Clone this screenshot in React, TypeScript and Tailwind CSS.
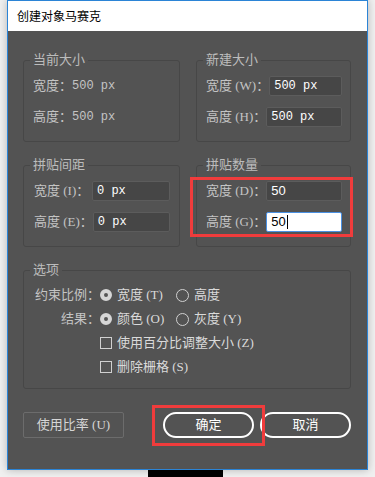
import React from "react";

const serif = "font-['Liberation_Serif','Noto_Sans_CJK_SC',serif]";
const mono = "font-['Liberation_Mono',monospace]";

const Group: React.FC<{ title: string; className?: string; children: React.ReactNode }> = ({
  title,
  className = "",
  children,
}) => (
  <div className={`relative border border-[#474747] rounded-[3px] ${className}`}>
    <span className="absolute left-[6px] top-[-9px] px-[3px] bg-[#535353] text-[13px] leading-[16px] text-[#bcbcbc]">
      {title}
    </span>
    {children}
  </div>
);

const Field: React.FC<{ label: string; value: string; sans?: boolean }> = ({ label, value, sans }) => (
  <div className="flex h-[20px] items-center justify-between">
    <span className="text-[13px] text-[#c4c4c4] whitespace-nowrap">{label}</span>
    <div className="flex h-[20px] w-[78px] items-center rounded-[2px] border border-[#5c5c5c] bg-[#464646] pl-[4px]">
      <span
        className={
          sans
            ? "font-['Liberation_Sans',sans-serif] text-[13px] text-white"
            : `${mono} text-[12px] text-white whitespace-pre`
        }
      >
        {value}
      </span>
    </div>
  </div>
);

const Radio: React.FC<{ checked?: boolean; label: string }> = ({ checked, label }) => (
  <div className="flex w-[76px] items-center gap-[5px]">
    {checked ? (
      <span className="h-[12px] w-[12px] rounded-full border-[4px] border-[#d6d6d6] bg-[#555]" />
    ) : (
      <span className="h-[13px] w-[13px] rounded-full border border-[#d0d0d0]" />
    )}
    <span className="text-[13px] text-[#dadada] whitespace-nowrap">{label}</span>
  </div>
);

const Check: React.FC<{ label: string }> = ({ label }) => (
  <div className="flex items-center gap-[5px]">
    <span className="h-[12px] w-[12px] border border-[#d0d0d0]" />
    <span className="text-[13px] text-[#dadada] whitespace-nowrap">{label}</span>
  </div>
);

export default function App() {
  return (
    <div className={`relative h-[477px] w-[375px] overflow-hidden bg-[#f0f0f0] ${serif}`}>
      <div className="ml-[7px] flex h-[470px] w-[361px] flex-col border border-[#2b84d6] shadow-[0_0_8px_rgba(0,0,0,0.25)]">
        <div className="flex h-[30px] items-center bg-white pl-[9px] font-['Noto_Sans_CJK_SC',sans-serif] text-[12px] text-black">
          创建对象马赛克
        </div>
        <div className="flex flex-1 flex-col bg-[#535353] pl-[15px] pr-[16px] pt-[29px]">
          <div className="flex gap-[16px]">
            <Group title="当前大小" className="w-[157px]">
              <div className="flex flex-col gap-[11px] pb-[14px] pl-[9px] pt-[15px]">
                <div className="flex h-[20px] items-center text-[13px] text-[#c4c4c4] whitespace-pre">
                  宽度：<span className={`${mono} text-[12px]`}>500 px</span>
                </div>
                <div className="flex h-[20px] items-center text-[13px] text-[#c4c4c4] whitespace-pre">
                  高度：<span className={`${mono} text-[12px]`}>500 px</span>
                </div>
              </div>
            </Group>
            <Group title="新建大小" className="w-[155px]">
              <div className="flex flex-col gap-[11px] pb-[14px] pl-[9px] pr-[8px] pt-[15px]">
                <Field label="宽度 (W)：" value="500 px" />
                <Field label="高度 (H)：" value="500 px" />
              </div>
            </Group>
          </div>

          <div className="mt-[23px] flex gap-[16px]">
            <Group title="拼贴间距" className="w-[157px]">
              <div className="flex flex-col gap-[11px] pb-[14px] pl-[10px] pr-[9px] pt-[15px]">
                <Field label="宽度 (I)：" value="0 px" />
                <Field label="高度 (E)：" value="0 px" />
              </div>
            </Group>
            <Group title="拼贴数量" className="w-[155px]">
              <div className="flex flex-col gap-[11px] pb-[14px] pl-[9px] pr-[8px] pt-[15px]">
                <Field label="宽度 (D)：" value="50" sans />
                <div className="flex h-[20px] items-center justify-between">
                  <span className="text-[13px] text-[#c4c4c4] whitespace-nowrap">高度 (G)：</span>
                  <div className="flex h-[20px] w-[78px] items-center rounded-[2px] border border-[#4a90e2] bg-white pl-[4px]">
                    <span className="border-r border-black pr-[1px] font-['Liberation_Sans',sans-serif] text-[13px] leading-[14px] text-black">
                      50
                    </span>
                  </div>
                </div>
              </div>
            </Group>
          </div>

          <Group title="选项" className="mt-[23px] w-full">
            <div className="flex flex-col gap-[4px] pb-[11px] pl-[10px] pt-[14px]">
              <div className="flex h-[20px] items-center">
                <span className="w-[66px] text-right text-[13px] text-[#c4c4c4] whitespace-nowrap">约束比例：</span>
                <Radio checked label="宽度 (T)" />
                <Radio label="高度" />
              </div>
              <div className="flex h-[20px] items-center">
                <span className="w-[66px] text-right text-[13px] text-[#c4c4c4] whitespace-nowrap">结果：</span>
                <Radio checked label="颜色 (O)" />
                <Radio label="灰度 (Y)" />
              </div>
              <div className="flex h-[20px] items-center pl-[66px]">
                <Check label="使用百分比调整大小 (Z)" />
              </div>
              <div className="flex h-[20px] items-center pl-[66px]">
                <Check label="删除栅格 (S)" />
              </div>
            </div>
          </Group>

          <div className="mt-[23px] flex items-center justify-between">
            <button className="flex h-[26px] w-[101px] items-center justify-center rounded-[2px] border border-[#6c6c6c] text-[13px] text-[#d6d6d6]">
              使用比率 (U)
            </button>
            <div className="flex gap-[6px]">
              <button className="flex h-[26px] w-[91px] items-center justify-center rounded-full border-2 border-white text-[13px] text-white">
                确定
              </button>
              <button className="flex h-[26px] w-[91px] items-center justify-center rounded-full border-2 border-white text-[13px] text-white">
                取消
              </button>
            </div>
          </div>
        </div>
      </div>
      <div className="ml-[148px] h-[8px] w-[75px] bg-black" />

      <div className="absolute left-[190px] top-[177px] h-[60px] w-[163px] border-[3px] border-[#f03c3c]" />
      <div className="absolute left-[152px] top-[405px] h-[41px] w-[113px] border-[3px] border-[#f03c3c]" />
    </div>
  );
}
